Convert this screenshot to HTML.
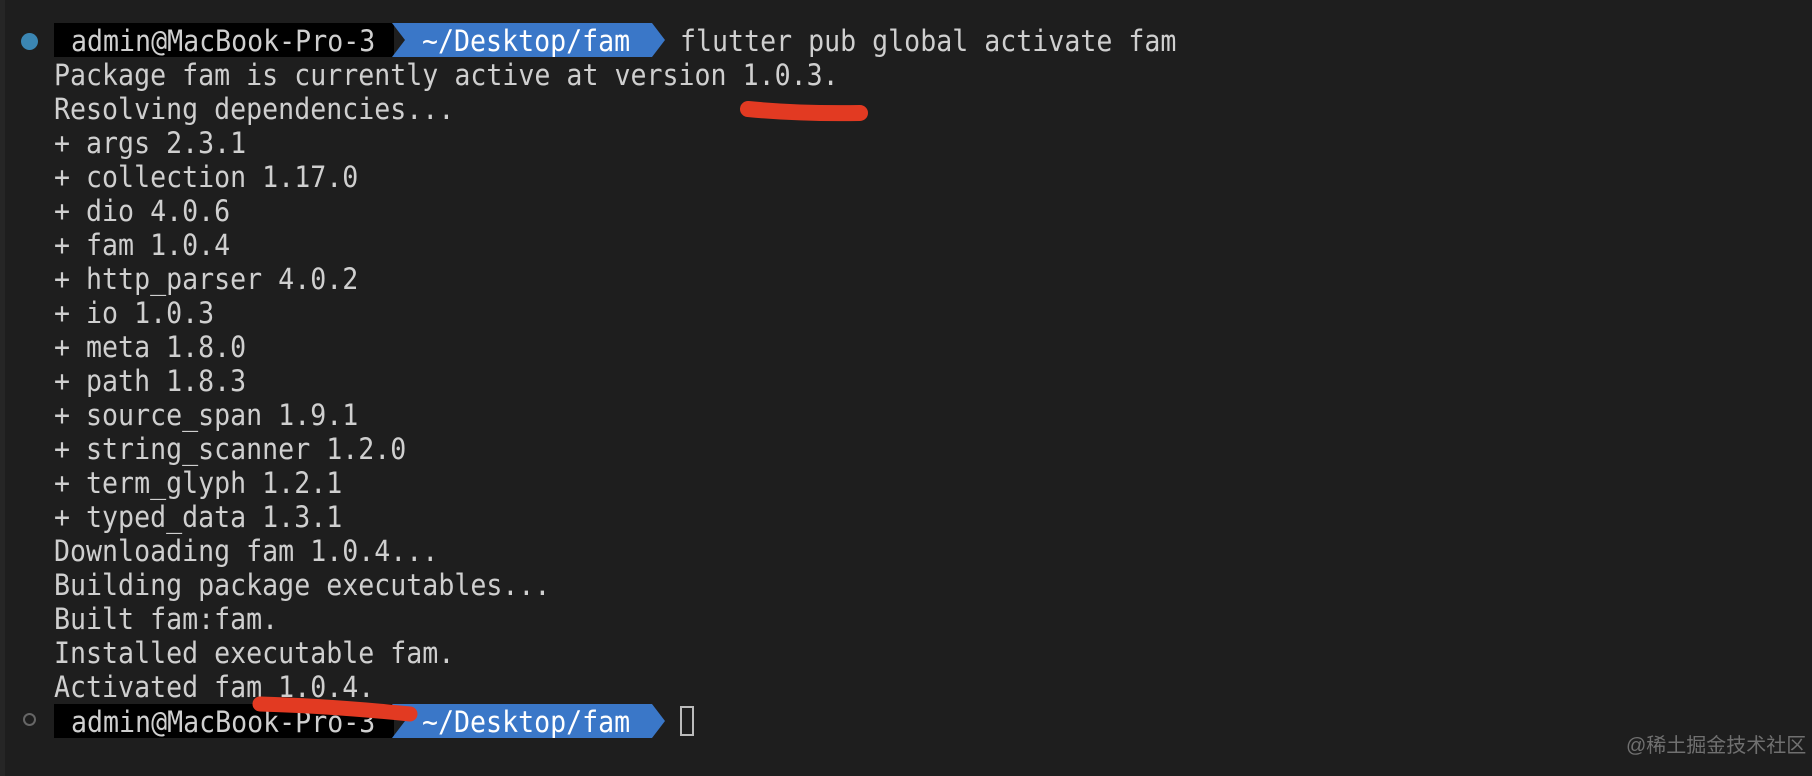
<!DOCTYPE html>
<html><head><meta charset="utf-8"><style>
html,body{margin:0;padding:0}
body{width:1812px;height:776px;background:#1e1e1e;position:relative;overflow:hidden;font-family:"DejaVu Sans Mono","Liberation Mono",monospace;color:#cfcfcf}
.l{position:absolute;left:54px;font-size:26px;line-height:34px;height:34px;white-space:pre;letter-spacing:0px;transform-origin:left center;transform:scaleX(1.023) scaleY(1.12)}
.strip{position:absolute;left:0;top:0;width:5px;height:776px;background:#262626}
.wm{position:absolute;left:1626px;top:729px;font-family:"Liberation Sans","Noto Sans CJK SC",sans-serif;font-size:20px;color:#707070}
</style></head><body>
<div class="strip"></div>
<div style="position:absolute;left:21px;top:33px;width:17px;height:17px;border-radius:50%;background:#3b86b3"></div>
<svg style="position:absolute;left:54px;top:23px" width="620" height="34">
<rect x="0" y="0" width="340" height="34" fill="#000"/>
<polygon points="338,0 598,0 611,17 598,34 338,34 351,17" fill="#3a77c8"/>
</svg>
<div class="l" style="top:25px;left:71px">admin@MacBook-Pro-3</div>
<div class="l" style="top:25px;left:422px;color:#fff">~/Desktop/fam</div>
<div class="l" style="top:25px;left:680px">flutter pub global activate fam</div>
<div class="l" style="top:59px">Package fam is currently active at version 1.0.3.</div>
<div class="l" style="top:93px">Resolving dependencies...</div>
<div class="l" style="top:127px">+ args 2.3.1</div>
<div class="l" style="top:161px">+ collection 1.17.0</div>
<div class="l" style="top:195px">+ dio 4.0.6</div>
<div class="l" style="top:229px">+ fam 1.0.4</div>
<div class="l" style="top:263px">+ http_parser 4.0.2</div>
<div class="l" style="top:297px">+ io 1.0.3</div>
<div class="l" style="top:331px">+ meta 1.8.0</div>
<div class="l" style="top:365px">+ path 1.8.3</div>
<div class="l" style="top:399px">+ source_span 1.9.1</div>
<div class="l" style="top:433px">+ string_scanner 1.2.0</div>
<div class="l" style="top:467px">+ term_glyph 1.2.1</div>
<div class="l" style="top:501px">+ typed_data 1.3.1</div>
<div class="l" style="top:535px">Downloading fam 1.0.4...</div>
<div class="l" style="top:569px">Building package executables...</div>
<div class="l" style="top:603px">Built fam:fam.</div>
<div class="l" style="top:637px">Installed executable fam.</div>
<div class="l" style="top:671px">Activated fam 1.0.4.</div>
<div style="position:absolute;left:23px;top:713px;width:13px;height:13px;border-radius:50%;border:2px solid #666;box-sizing:border-box"></div>
<svg style="position:absolute;left:54px;top:704px" width="620" height="34">
<rect x="0" y="0" width="340" height="34" fill="#000"/>
<polygon points="338,0 598,0 611,17 598,34 338,34 351,17" fill="#3a77c8"/>
</svg>
<div class="l" style="top:706px;left:71px">admin@MacBook-Pro-3</div>
<div class="l" style="top:706px;left:422px;color:#fff">~/Desktop/fam</div>
<div style="position:absolute;left:680px;top:706px;width:14px;height:30px;border:2px solid #bbb;box-sizing:border-box"></div>
<svg style="position:absolute;left:0;top:0" width="1812" height="776">
<path d="M748,109 Q800,114 860,113" stroke="#e23a22" stroke-width="16" stroke-linecap="round" fill="none"/>
<path d="M260,704 Q330,706 410,714" stroke="#e23a22" stroke-width="15" stroke-linecap="round" fill="none"/>
</svg>
<div class="wm">@稀土掘金技术社区</div>
</body></html>
